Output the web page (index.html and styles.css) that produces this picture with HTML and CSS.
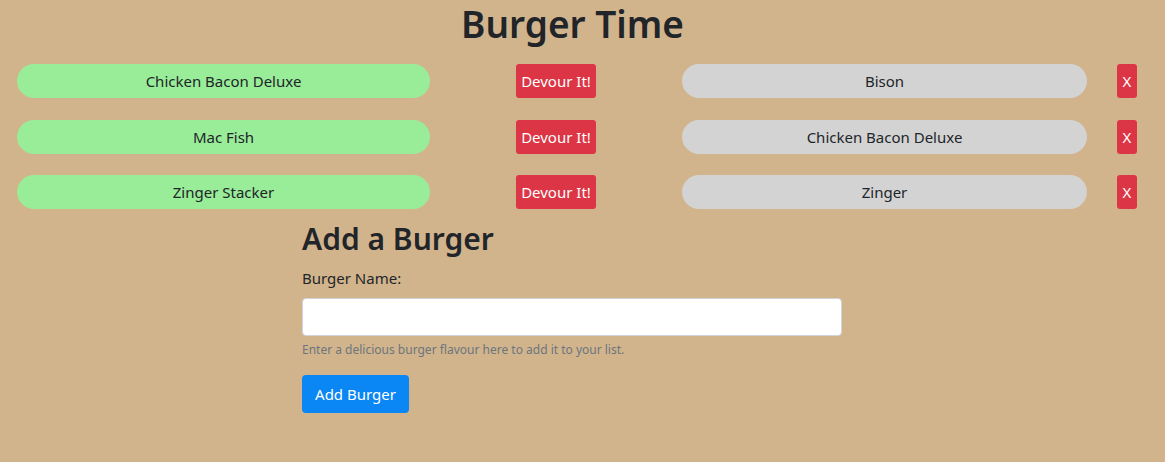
FILE: index.html
```html
<!DOCTYPE html>
<html lang="en">
<head>
<meta charset="utf-8">
<title>Burger Time</title>
<link rel="stylesheet" href="styles.css">
</head>
<body>
<main class="page">
  <h1 class="title">Burger Time</h1>
  <section class="lists">
    <ul class="list list-fresh">
      <li class="item"><span class="pill pill-green">Chicken Bacon Deluxe</span><button class="btn btn-danger btn-devour">Devour It!</button></li>
      <li class="item"><span class="pill pill-green">Mac Fish</span><button class="btn btn-danger btn-devour">Devour It!</button></li>
      <li class="item"><span class="pill pill-green">Zinger Stacker</span><button class="btn btn-danger btn-devour">Devour It!</button></li>
    </ul>
    <ul class="list list-eaten">
      <li class="item"><span class="pill pill-grey">Bison</span><button class="btn btn-danger btn-x">X</button></li>
      <li class="item"><span class="pill pill-grey">Chicken Bacon Deluxe</span><button class="btn btn-danger btn-x">X</button></li>
      <li class="item"><span class="pill pill-grey">Zinger</span><button class="btn btn-danger btn-x">X</button></li>
    </ul>
  </section>
  <form class="add-form">
    <h2 class="form-title">Add a Burger</h2>
    <label class="form-label" for="burger">Burger Name:</label>
    <input class="form-input" id="burger" type="text">
    <small class="form-help">Enter a delicious burger flavour here to add it to your list.</small>
    <button class="btn btn-primary" type="button">Add Burger</button>
  </form>
</main>
</body>
</html>
```

FILE: styles.css
```css
html, body {
  margin: 0;
  padding: 0;
  background: #d2b48c;
}
body {
  font-family: "Noto Sans", "Open Sans", sans-serif;
  font-size: 15px;
  line-height: 24px;
  color: #212529;
}
.page {
  width: 1145px;
}
.title {
  margin: 0 0 16px;
  font-size: 37px;
  font-weight: 600;
  line-height: 48px;
  text-align: center;
}
.lists {
  display: flex;
}
.list {
  list-style: none;
  margin: 0;
  padding: 0;
  display: flex;
  flex-direction: column;
  gap: 21.5px;
}
.list-fresh {
  padding-left: 17px;
}
.list-eaten {
  padding-left: 86px;
}
.item {
  display: flex;
  align-items: center;
  height: 34px;
}
.pill {
  display: flex;
  align-items: center;
  justify-content: center;
  height: 34px;
  border-radius: 17px;
}
.pill-green {
  width: 413px;
  background: #99ec98;
}
.pill-grey {
  width: 405px;
  background: #d3d3d3;
}
.btn {
  font-family: inherit;
  font-size: 15px;
  line-height: 24px;
  border: 0;
  border-radius: 3px;
  color: #fff;
  cursor: pointer;
  padding: 0;
}
.btn-danger {
  background: #dc3545;
  height: 34px;
}
.btn-devour {
  width: 80px;
  margin-left: 86px;
}
.btn-x {
  width: 20px;
  margin-left: 30px;
}
.add-form {
  display: flex;
  flex-direction: column;
  align-items: flex-start;
  width: 540px;
  margin: 11px 0 0 302px;
}
.form-title {
  margin: 0 0 8px;
  font-size: 30px;
  font-weight: 600;
  line-height: 38px;
}
.form-label {
  line-height: 24px;
  margin-bottom: 8px;
}
.form-input {
  box-sizing: border-box;
  width: 540px;
  height: 38px;
  border: 1px solid #ced4da;
  border-radius: 4px;
  background: #fff;
}
.form-help {
  margin-top: 4px;
  margin-bottom: 16px;
  font-size: 12px;
  line-height: 19px;
  color: #6c757d;
}
.btn-primary {
  background: #0b86f5;
  width: 107px;
  height: 38px;
  border-radius: 4px;
}
```
